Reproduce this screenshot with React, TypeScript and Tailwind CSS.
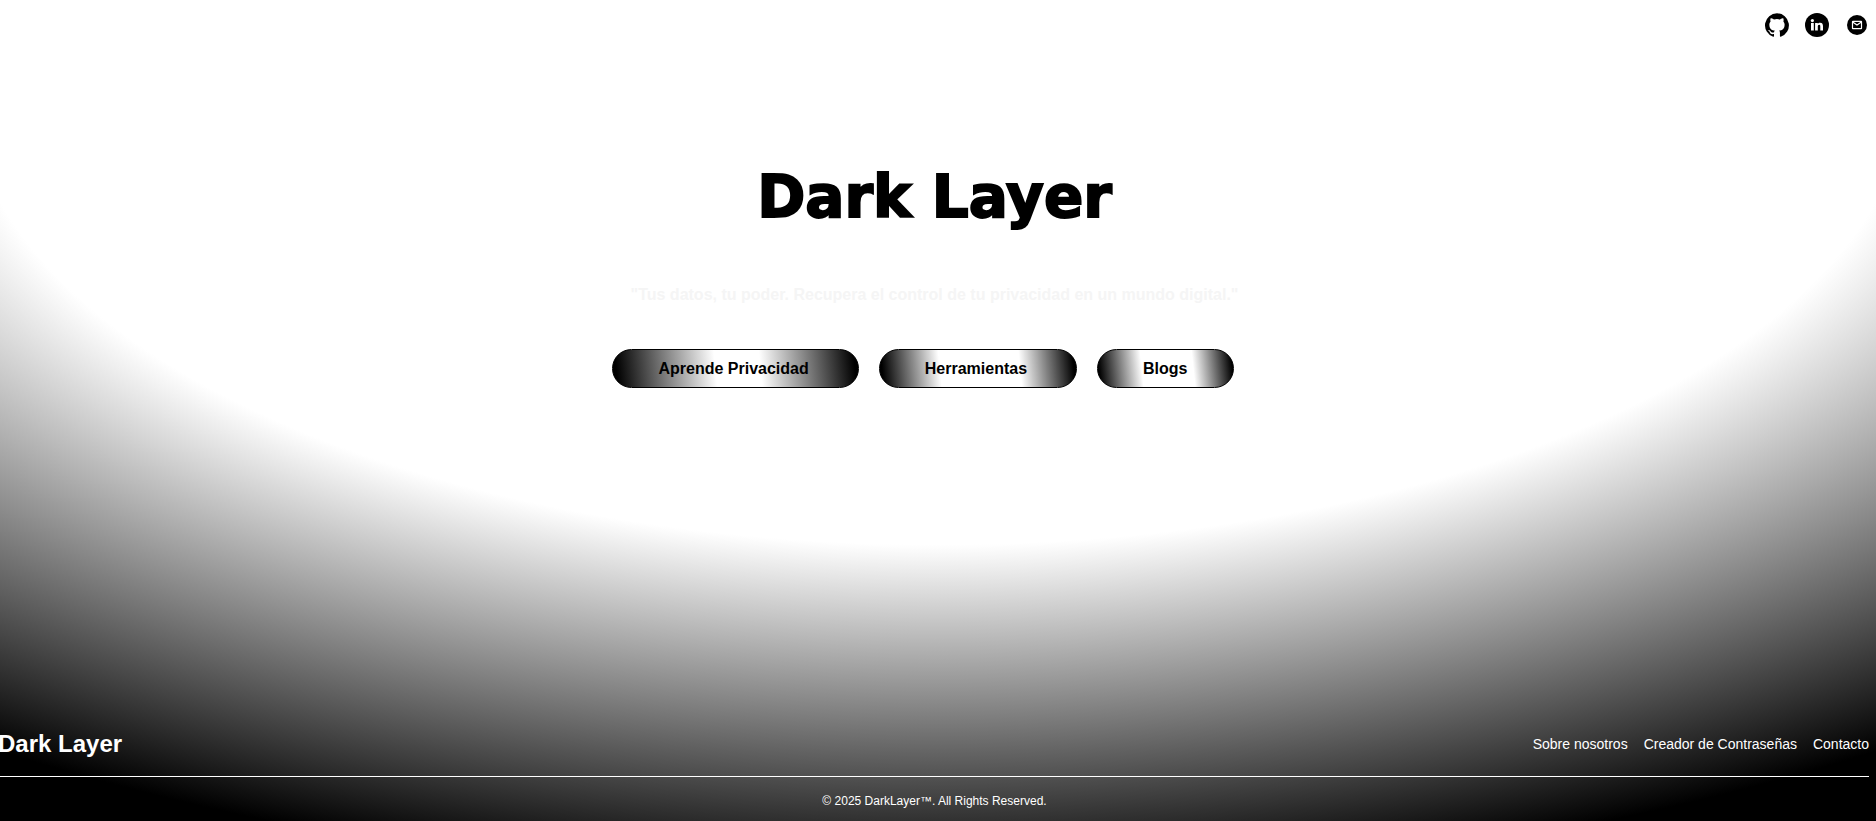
const pill =
  "flex h-[39px] items-center justify-center rounded-full border border-black pl-[45px] text-base font-bold text-black";

function GithubIcon() {
  return (
    <svg viewBox="0 0 24 24" className="size-6" fill="currentColor" aria-hidden="true">
      <path d="M12 .3a12 12 0 0 0-3.8 23.38c.6.12.83-.26.83-.57L9 21.07c-3.34.72-4.04-1.61-4.04-1.61-.55-1.39-1.34-1.76-1.34-1.76-1.08-.74.09-.73.09-.73 1.2.09 1.83 1.24 1.83 1.24 1.08 1.83 2.81 1.3 3.5 1 .1-.78.42-1.31.76-1.61-2.67-.3-5.47-1.33-5.47-5.93 0-1.31.47-2.38 1.24-3.22-.14-.3-.54-1.52.1-3.18 0 0 1-.32 3.3 1.23a11.5 11.5 0 0 1 6 0c2.28-1.55 3.29-1.23 3.29-1.23.64 1.66.24 2.88.12 3.18a4.65 4.65 0 0 1 1.23 3.22c0 4.61-2.8 5.63-5.48 5.92.42.36.81 1.1.81 2.22l-.01 3.29c0 .31.2.69.82.57A12 12 0 0 0 12 .3Z" />
    </svg>
  );
}

function LinkedinIcon() {
  return (
    <svg viewBox="0 0 24 24" className="size-6" aria-hidden="true">
      <circle cx="12" cy="12" r="12" fill="black" />
      <g fill="white">
        <circle cx="7.4" cy="7.6" r="1.6" />
        <path d="M6 9.9h2.8v7.5H6zM10.1 9.9h2.7v1c.4-.7 1.2-1.2 2.3-1.2 2.4 0 2.9 1.6 2.9 3.6v4.1h-2.7v-3.7c0-.9 0-1.9-1.1-1.9s-1.4.9-1.4 1.8v3.8h-2.7z" />
      </g>
    </svg>
  );
}

function MailIcon() {
  return (
    <svg viewBox="0 0 24 24" className="size-6" aria-hidden="true">
      <circle cx="12" cy="12" r="10" fill="black" />
      <g fill="none" stroke="white" strokeWidth="1.2">
        <rect x="7.5" y="8.4" width="9" height="7.2" rx="0.4" />
        <path d="m7.6 9 4.4 3 4.4-3" />
      </g>
    </svg>
  );
}

export default function App() {
  return (
    <div className="flex min-h-screen flex-col overflow-x-hidden bg-[radial-gradient(90%_98%_at_50%_10%,#fff_57.5%,#000_100%)] pr-[7px] font-['Liberation_Sans',Arial,sans-serif]">
      <header className="flex justify-end gap-4 pt-[13px] text-black">
        <a href="#github" aria-label="GitHub"><GithubIcon /></a>
        <a href="#linkedin" aria-label="LinkedIn"><LinkedinIcon /></a>
        <a href="#mail" aria-label="Correo"><MailIcon /></a>
      </header>
      <main className="flex flex-1 flex-col items-center pt-[118px]">
        <h1 className="font-['Arial_Black','DejaVu_Sans',sans-serif] text-[58px] leading-[84px] font-black text-black [-webkit-text-stroke:2px_black]">Dark Layer</h1>
        <p className="mt-11 text-base leading-6 font-bold text-[#f5f5f5]">"Tus datos, tu poder. Recupera el control de tu privacidad en un mundo digital."</p>
        <nav className="mt-[42px] mr-[23px] flex gap-5">
          <a href="#privacidad" className={`${pill} bg-[linear-gradient(84deg,#000_2%,#fff_42%,#fff_60%,#000_98%)] pr-[49px]`}>Aprende Privacidad</a>
          <a href="#herramientas" className={`${pill} bg-[linear-gradient(84deg,#000_2%,#fff_31%,#fff_71%,#000_98%)] pr-[49px]`}>Herramientas</a>
          <a href="#blogs" className={`${pill} bg-[linear-gradient(84deg,#000_2%,#fff_33%,#fff_70%,#000_98%)] pr-[45px]`}>Blogs</a>
        </nav>
      </main>
      <footer className="text-white">
        <div className="flex items-center justify-between border-b border-white pb-4">
          <span className="-ml-0.5 text-2xl font-bold">Dark Layer</span>
          <nav className="flex gap-4 text-sm">
            <a href="#nosotros">Sobre nosotros</a>
            <a href="#creador">Creador de Contraseñas</a>
            <a href="#contacto">Contacto</a>
          </nav>
        </div>
        <p className="pt-4 pb-3 text-center text-xs">© 2025 DarkLayer™. All Rights Reserved.</p>
      </footer>
    </div>
  );
}
